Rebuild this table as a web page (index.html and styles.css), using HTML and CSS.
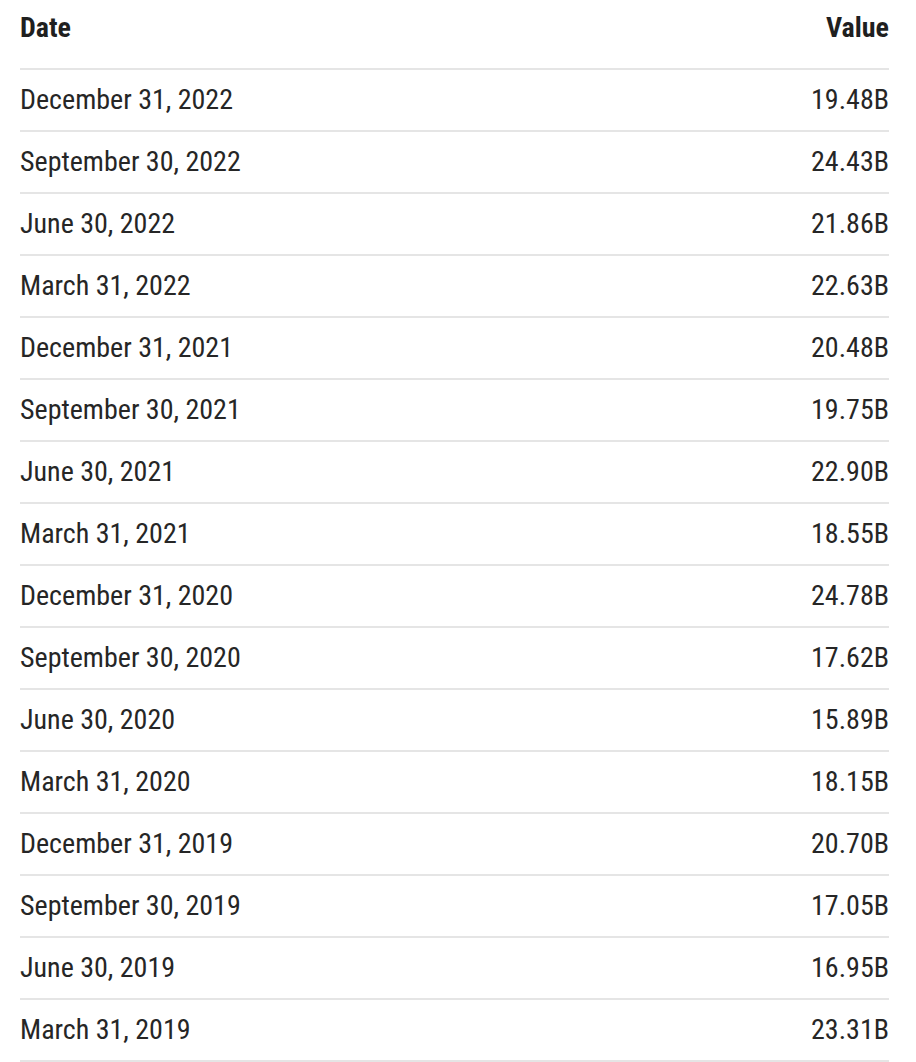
FILE: index.html
```html
<!DOCTYPE html>
<html>
<head>
<meta charset="utf-8">
<link rel="stylesheet" href="styles.css">
</head>
<body>
<div class="table">
  <div class="row head"><span>Date</span><span>Value</span></div>
  <div class="row"><span>December 31, 2022</span><span>19.48B</span></div>
  <div class="row"><span>September 30, 2022</span><span>24.43B</span></div>
  <div class="row"><span>June 30, 2022</span><span>21.86B</span></div>
  <div class="row"><span>March 31, 2022</span><span>22.63B</span></div>
  <div class="row"><span>December 31, 2021</span><span>20.48B</span></div>
  <div class="row"><span>September 30, 2021</span><span>19.75B</span></div>
  <div class="row"><span>June 30, 2021</span><span>22.90B</span></div>
  <div class="row"><span>March 31, 2021</span><span>18.55B</span></div>
  <div class="row"><span>December 31, 2020</span><span>24.78B</span></div>
  <div class="row"><span>September 30, 2020</span><span>17.62B</span></div>
  <div class="row"><span>June 30, 2020</span><span>15.89B</span></div>
  <div class="row"><span>March 31, 2020</span><span>18.15B</span></div>
  <div class="row"><span>December 31, 2019</span><span>20.70B</span></div>
  <div class="row"><span>September 30, 2019</span><span>17.05B</span></div>
  <div class="row"><span>June 30, 2019</span><span>16.95B</span></div>
  <div class="row"><span>March 31, 2019</span><span>23.31B</span></div>
</div>
</body>
</html>
```
FILE: styles.css
```css
html, body {
  margin: 0;
  padding: 0;
  background: #fff;
}
body {
  font-family: "Roboto Condensed", Roboto, sans-serif;
  color: #262626;
}
.table {
  margin: 0 27px 0 20px;
}
.row {
  display: flex;
  justify-content: space-between;
  align-items: center;
  height: 60px;
  border-bottom: 2px solid #e5e5e5;
  font-size: 28px;
  font-weight: 400;
}
.row span {
  padding-bottom: 2px;
}
.row.head {
  height: 68px;
  align-items: flex-start;
  font-weight: 700;
  color: #1f1f1f;
}
.row.head span {
  padding-bottom: 0;
  padding-top: 11px;
}
```
